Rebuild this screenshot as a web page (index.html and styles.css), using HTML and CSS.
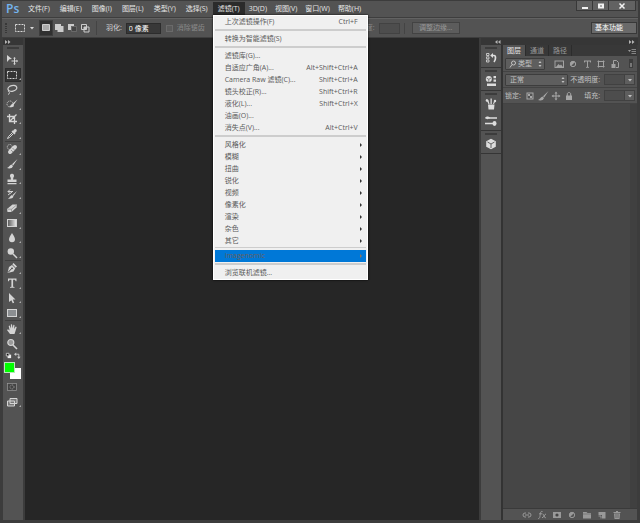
FILE: index.html
```html
<!DOCTYPE html>
<html lang="zh-CN">
<head>
<meta charset="utf-8">
<title>Ps</title>
<link rel="stylesheet" href="styles.css">
</head>
<body>
<svg class="defs" aria-hidden="true">
  <symbol id="marquee" viewBox="0 0 12 12"><rect x="1.5" y="2.5" width="9" height="7" fill="none" stroke="currentColor" stroke-dasharray="2 1"/></symbol>
  <symbol id="move" viewBox="0 0 12 12"><path d="M1 1l5 4-2.500.3L1 8z" fill="currentColor"/><path d="M8.500 4v6M5.500 7h6" stroke="currentColor"/><path d="M8.500 3l1.500 1.500h-3zM8.500 11l1.500-1.500h-3zM12 7l-1.500 1.500v-3z" fill="currentColor"/></symbol>
  <symbol id="lasso" viewBox="0 0 12 12"><ellipse cx="6.500" cy="4.500" rx="4.500" ry="2.800" fill="none" stroke="currentColor" stroke-width="1.200" transform="rotate(-12 6 5)"/><path d="M3 6.500c-1.500 1 .5 2 .5 2s0 1.500-1.500 2" fill="none" stroke="currentColor"/></symbol>
  <symbol id="quick" viewBox="0 0 12 12"><circle cx="4" cy="6" r="3" fill="none" stroke="currentColor" stroke-dasharray="1 1"/><path d="M11.500 1.500L6 6l1.200 1.500zM6.500 6C5 6 5 8 3 8.500c2 1.500 5 .5 5-1z" fill="currentColor"/></symbol>
  <symbol id="crop" viewBox="0 0 12 12"><path d="M3.500 1v7.500H11M1 3.500h7.500V11M4 8l6.500-6.500" fill="none" stroke="currentColor" stroke-width="1.300"/></symbol>
  <symbol id="dropper" viewBox="0 0 12 12"><path d="M8 1.500c1.500-1.500 3.500.5 2.500 2L9 5l.5.700-1 .8L5.500 3.500l1-1 .7.300z" fill="currentColor"/><path d="M6.500 4.500l-4 4-1 2 2-1 4-4" fill="none" stroke="currentColor"/></symbol>
  <symbol id="heal" viewBox="0 0 12 12"><circle cx="3.800" cy="4" r="2.500" fill="none" stroke="currentColor" stroke-dasharray="1 1"/><rect x="1" y="4.500" width="11" height="4" rx="2" fill="currentColor" transform="rotate(-45 6.500 6.500)"/><path d="M5 7l2 2M6.500 5l2 2" stroke="#777" stroke-width=".7"/></symbol>
  <symbol id="brush" viewBox="0 0 12 12"><path d="M11.500 1L6 6.300l1.200 1.200zM5.500 6.500l1.500 1.500c-.5 2.500-4 3-6 2 2-.5 2.500-3 4.500-3.500z" fill="currentColor"/></symbol>
  <symbol id="stamp" viewBox="0 0 12 12"><path d="M6 .8a2 2 0 0 1 1.500 3.400L7 6.500h3.500v2.500h-9V6.500H5l-.5-2.300A2 2 0 0 1 6 .8zM1.500 10h9v1.200h-9z" fill="currentColor"/></symbol>
  <symbol id="history" viewBox="0 0 12 12"><path d="M11 3L6.500 7l1 1zM6 7l1.500 1.500C7 10.500 4 11 2 10.500 4 10 4 7.500 6 7z" fill="currentColor"/><path d="M2 3.500h5M4 1.500l-2 2 2 2M2 7l4-3" stroke="currentColor" fill="none"/></symbol>
  <symbol id="eraser" viewBox="0 0 12 12"><path d="M1 7l5.500-4.500H11L10.500 5.500 5.500 10H1.500z" fill="currentColor"/><path d="M1.500 7.200h4L11 2.700M5.500 7.200V10" fill="none" stroke="#888" stroke-width=".7"/></symbol>
  <symbol id="gradient" viewBox="0 0 12 12"><linearGradient id="fade"><stop stop-color="#555"/><stop offset="1" stop-color="#eee"/></linearGradient><rect x="1.500" y="2.500" width="9" height="7" fill="url(#fade)" stroke="currentColor"/></symbol>
  <symbol id="drop" viewBox="0 0 12 12"><path d="M6 1c1 2 3 4 3 6.300a3 3 0 0 1-6 0C3 5 5 3 6 1z" fill="currentColor"/></symbol>
  <symbol id="dodge" viewBox="0 0 12 12"><circle cx="4.800" cy="4.500" r="3.200" fill="currentColor"/><path d="M7 7l4 4" stroke="currentColor" stroke-width="1.500"/></symbol>
  <symbol id="pen" viewBox="0 0 12 12"><path d="M7.500 1L11 4.500 9.700 5.700 6.300 2.300zM6 3l3.300 3.300L7.500 9.500 1.500 11 3 5z" fill="currentColor"/><path d="M2 10.500l3.500-3.800" stroke="#444"/><circle cx="6" cy="6.300" r=".9" fill="#444"/></symbol>
  <symbol id="type" viewBox="0 0 12 12"><path d="M2 1.500h8.500v2.800h-.8L9 2.700H7.100v7l1.400.3v.8H4V10l1.400-.3v-7H3.500l-.7 1.600H2z" fill="currentColor"/></symbol>
  <symbol id="arrow" viewBox="0 0 12 12"><path d="M3 1l6.500 6.500H6.800L8.200 10.700l-1.500.6L5.400 8.300 3 10z" fill="currentColor"/></symbol>
  <symbol id="shape" viewBox="0 0 12 12"><rect x="1.500" y="2.500" width="9" height="7" fill="#8b8e91" stroke="currentColor"/></symbol>
  <symbol id="hand" viewBox="0 0 12 12"><path d="M4 11L1 7l1-.7 1.600 1.200L2.700 3l1-.4L5 5.500 4.800 1.500 6 1.300l.6 4 .8-3.600 1.100.3-.3 4L9.700 3.500l1 .5L9.500 8 8.500 11z" fill="currentColor"/></symbol>
  <symbol id="zoom" viewBox="0 0 12 12"><circle cx="4.800" cy="4.500" r="3" fill="#9a9a9a" stroke="currentColor" stroke-width="1.200"/><path d="M7 7l4 4" stroke="currentColor" stroke-width="1.600"/></symbol>
  <symbol id="mask" viewBox="0 0 12 12"><rect x="1.500" y="2.500" width="9" height="7" fill="#444" stroke="currentColor" stroke-width=".7"/><circle cx="6" cy="6" r="2" fill="none" stroke="currentColor" stroke-dasharray="1 .7"/></symbol>
  <symbol id="screens" viewBox="0 0 12 12"><path d="M4 2.500h7v5H4zM1.500 5h7v5h-7z" fill="#777" stroke="currentColor"/></symbol>
  <symbol id="b-new" viewBox="0 0 12 12"><path d="M2.500 2.500h7v6h-7z" fill="#aaa" stroke="currentColor"/></symbol>
  <symbol id="b-add" viewBox="0 0 12 12"><path d="M2 2h6v2h2.500v6h-6V8H2z" fill="currentColor"/></symbol>
  <symbol id="b-sub" viewBox="0 0 12 12"><path d="M2 2h6v2H5v4H2z" fill="currentColor"/><path d="M5.500 4.500h5v5h-5z" fill="#444" stroke="#777" stroke-width=".7"/></symbol>
  <symbol id="b-cut" viewBox="0 0 12 12"><path d="M2.500 2.500h5v5h-5zM5 5h5v5H5z" fill="none" stroke="currentColor"/><path d="M5 5h2.500v2.500H5z" fill="currentColor"/></symbol>
  <symbol id="d-history" viewBox="0 0 12 12"><path d="M1.500 1.500h2.500v2H1.500zM1.500 4.800h2.500v2H1.500zM1.500 8h2.500v2H1.500z" fill="none" stroke="currentColor" stroke-width=".8"/><path d="M7 3.500h2c2 0 2 4 0 6.500" fill="none" stroke="currentColor" stroke-width="1.700"/><path d="M5.200 3.500L8 1v5z" fill="currentColor"/></symbol>
  <symbol id="d-props" viewBox="0 0 12 12"><circle cx="3.800" cy="4" r="3" fill="currentColor"/><path d="M1.500 3l2.300 1.300L6 3M3.800 4.300V7" stroke="#555" stroke-width=".7" fill="none"/><path d="M8.500 1h2.500v2.200H8.500zM8.500 4.500h2.500v2.200H8.500zM2 8.500h9v2.500H2z" fill="currentColor"/></symbol>
  <symbol id="d-brushes" viewBox="0 0 12 12"><path d="M3 6.500h6.500L9 11.500H3.500zM1 1l2.500 1.500 1 3.500h-1zM5.500.5h1.300V6H5.500zM11 2L9 3 8 6h1z" fill="currentColor"/><circle cx="2" cy="2.500" r="1.300" fill="currentColor"/><circle cx="10" cy="3" r="1.200" fill="currentColor"/></symbol>
  <symbol id="d-presets" viewBox="0 0 12 12"><path d="M4 3h8M0 8.500h8" stroke="currentColor" stroke-width="1.300"/><path d="M0 3c1-2 4-2 5 0-1 1.500-4 1.500-5 0z" fill="currentColor"/><ellipse cx="9.500" cy="8.500" rx="2" ry="2.400" fill="currentColor"/></symbol>
  <symbol id="d-cube" viewBox="0 0 12 12"><path d="M6 .8l4.800 2.500v5.400L6 11.300 1.200 8.700V3.300z" fill="currentColor"/><path d="M2.500 4L6 6l3.500-2M6 6v4" fill="none" stroke="#555" stroke-width=".9"/></symbol>
  <symbol id="image" viewBox="0 0 12 12"><rect x="2" y="3" width="8.500" height="6.500" fill="none" stroke="currentColor"/><path d="M3 9l2.500-3L7 7.500l1-1L10 9z" fill="currentColor"/></symbol>
  <symbol id="adjust" viewBox="0 0 12 12"><circle cx="6" cy="6" r="2.700" fill="#555" stroke="currentColor"/><path d="M4 8A2.800 2.800 0 0 1 8 4z" fill="currentColor"/></symbol>
  <symbol id="letter" viewBox="0 0 12 12"><path d="M3 2.500h7v2h-.7l-.5-1H7v5.300l1 .2v.7H5V9l1-.2V3.500H4.200l-.5 1H3z" fill="currentColor"/></symbol>
  <symbol id="vector" viewBox="0 0 12 12"><path d="M3.500 2.500v7M8.500 2.500v7M2.500 3.500h7M2.500 8.500h7" fill="none" stroke="currentColor"/></symbol>
  <symbol id="smart" viewBox="0 0 12 12"><path d="M4.500 6V2.500h3l2 2v5H7" fill="none" stroke="currentColor"/><path d="M2.500 6h4v4h-4z" fill="currentColor"/></symbol>
  <symbol id="pixels" viewBox="0 0 12 12"><rect x="3" y="3" width="6" height="6" fill="none" stroke="currentColor"/><path d="M4 4h2v2H4zM6 6h2v2H6z" fill="currentColor"/></symbol>
  <symbol id="cross" viewBox="0 0 12 12"><path d="M6 3v6M3 6h6" stroke="currentColor"/><path d="M6 1.500L7.500 3.500h-3zM6 10.500l1.500-2h-3zM1.500 6l2-1.500v3zM10.500 6l-2-1.500v3z" fill="currentColor"/></symbol>
  <symbol id="lock" viewBox="0 0 12 12"><path d="M3 5.500h6v4.500H3z" fill="currentColor"/><path d="M4.300 6V4c0-2 3.400-2 3.400 0v2" fill="none" stroke="currentColor"/></symbol>
  <symbol id="link" viewBox="0 0 12 12"><path d="M5 8H4a2 2 0 0 1 0-4h1M7 4h1a2 2 0 0 1 0 4H7M4 6h4" fill="none" stroke="currentColor"/></symbol>
  <symbol id="fx" viewBox="0 0 12 12"><path d="M2 9.500c2 .5 2-2.500 2.300-4.500S5.200 2 6.500 2.500M3 4.800h3M6.500 5c2 0 1 4 3.300 3.800M10 5C8.500 4.800 8 9 6 8.700" fill="none" stroke="currentColor"/></symbol>
  <symbol id="addmask" viewBox="0 0 12 12"><path d="M2 3h8v6H2z" fill="currentColor"/><circle cx="6" cy="6" r="1.600" fill="#444"/></symbol>
  <symbol id="folder" viewBox="0 0 12 12"><path d="M2 3h3.500l1 1h3.500v5.500H2z" fill="currentColor"/><path d="M2 5h8" stroke="#666" stroke-width=".6"/></symbol>
  <symbol id="new" viewBox="0 0 12 12"><path d="M2.500 3H9.500v6.500H6V6H2.500z" fill="currentColor"/><path d="M2.500 7h2.500v2.500" fill="none" stroke="currentColor"/></symbol>
  <symbol id="trash" viewBox="0 0 12 12"><path d="M3 4.500h6l-.5 5.500h-5zM2.500 3h7v1h-7zM5 2h2v1H5z" fill="currentColor"/><path d="M5 5v4M7 5v4" stroke="#555" stroke-width=".7"/></symbol>
  <symbol id="updown" viewBox="0 0 6 8"><path d="M3 1l1.500 2h-3zM3 7l1.500-2h-3z" fill="currentColor"/></symbol>
  <symbol id="down" viewBox="0 0 6 6"><path d="M1 2h4L3 4.500z" fill="currentColor"/></symbol>
  <symbol id="expand" viewBox="0 0 6 6"><path d="M0 1l2.500 2L0 5zM3 1l2.500 2L3 5z" fill="currentColor"/></symbol>
  <symbol id="collapse" viewBox="0 0 6 6"><path d="M2.500 1L0 3l2.500 2zM5.500 1L3 3l2.500 2z" fill="currentColor"/></symbol>
</svg>

<div class="app">
  <header class="menubar">
    <div class="logo">Ps</div>
    <nav class="menus">
      <button>文件(F)</button><button>编辑(E)</button><button>图像(I)</button><button>图层(L)</button><button>类型(Y)</button><button>选择(S)</button>
      <div class="menu-host">
        <button class="open" aria-expanded="true">滤镜(T)</button>
        <div class="dropdown" role="menu">
          <button role="menuitem">上次滤镜操作(F)<kbd>Ctrl+F</kbd></button>
          <hr>
          <button role="menuitem">转换为智能滤镜(S)</button>
          <hr>
          <button role="menuitem">滤镜库(G)...</button>
          <button role="menuitem">自适应广角(A)...<kbd>Alt+Shift+Ctrl+A</kbd></button>
          <button role="menuitem">Camera Raw 滤镜(C)...<kbd>Shift+Ctrl+A</kbd></button>
          <button role="menuitem">镜头校正(R)...<kbd>Shift+Ctrl+R</kbd></button>
          <button role="menuitem">液化(L)...<kbd>Shift+Ctrl+X</kbd></button>
          <button role="menuitem">油画(O)...</button>
          <button role="menuitem">消失点(V)...<kbd>Alt+Ctrl+V</kbd></button>
          <hr>
          <button role="menuitem" class="sub">风格化</button>
          <button role="menuitem" class="sub">模糊</button>
          <button role="menuitem" class="sub">扭曲</button>
          <button role="menuitem" class="sub">锐化</button>
          <button role="menuitem" class="sub">视频</button>
          <button role="menuitem" class="sub">像素化</button>
          <button role="menuitem" class="sub">渲染</button>
          <button role="menuitem" class="sub">杂色</button>
          <button role="menuitem" class="sub">其它</button>
          <hr class="tight">
          <button role="menuitem" class="sub current">Imagenomic</button>
          <hr>
          <button role="menuitem">浏览联机滤镜...</button>
        </div>
      </div>
      <button>3D(D)</button><button>视图(V)</button><button>窗口(W)</button><button>帮助(H)</button>
    </nav>
    <div class="window-buttons">
      <button aria-label="最小化"><svg viewBox="0 0 8 8"><path d="M1 6h6" stroke="currentColor" stroke-width="2"/></svg></button>
      <button aria-label="最大化"><svg viewBox="0 0 8 8"><path d="M2 2.500h4v3H2z" fill="none" stroke="currentColor" stroke-width="2"/></svg></button>
      <button class="close" aria-label="关闭"><svg viewBox="0 0 8 8"><path d="M1.500 1.500l5 5M6.500 1.500l-5 5" stroke="currentColor" stroke-width="1.500"/></svg></button>
    </div>
  </header>

  <div class="options">
    <span class="handle"></span>
    <button class="preset" aria-label="选框工具"><svg class="icon"><use href="#marquee"/></svg><svg class="tiny"><use href="#down"/></svg></button>
    <div class="modes">
      <button class="on" aria-label="新选区"><svg class="icon"><use href="#b-new"/></svg></button>
      <button aria-label="添加到选区"><svg class="icon"><use href="#b-add"/></svg></button>
      <button aria-label="从选区减去"><svg class="icon"><use href="#b-sub"/></svg></button>
      <button aria-label="与选区交叉"><svg class="icon"><use href="#b-cut"/></svg></button>
    </div>
    <label class="field feather">羽化: <input type="text" value="0 像素"></label>
    <label class="field dim"><input type="checkbox" disabled>消除锯齿</label>
    <label class="field dim height">高度: <input type="text" disabled></label>
    <button class="refine" disabled>调整边缘...</button>
    <button class="workspace-name">基本功能</button>
  </div>

  <main class="workspace">
    <aside class="tools">
      <div class="strip"><svg class="tiny"><use href="#expand"/></svg></div>
      <span class="grip"></span>
      <div class="group six">
        <button class="plain" aria-label="移动"><svg class="icon"><use href="#move"/></svg></button>
        <button class="on" aria-label="矩形选框"><svg class="icon"><use href="#marquee"/></svg></button>
        <button aria-label="套索"><svg class="icon"><use href="#lasso"/></svg></button>
        <button aria-label="快速选择"><svg class="icon"><use href="#quick"/></svg></button>
        <button aria-label="裁剪"><svg class="icon"><use href="#crop"/></svg></button>
        <button aria-label="吸管"><svg class="icon"><use href="#dropper"/></svg></button>
      </div>
      <div class="group eight">
        <button aria-label="修复画笔"><svg class="icon"><use href="#heal"/></svg></button>
        <button aria-label="画笔"><svg class="icon"><use href="#brush"/></svg></button>
        <button aria-label="仿制图章"><svg class="icon"><use href="#stamp"/></svg></button>
        <button aria-label="历史记录画笔"><svg class="icon"><use href="#history"/></svg></button>
        <button aria-label="橡皮擦"><svg class="icon"><use href="#eraser"/></svg></button>
        <button aria-label="渐变"><svg class="icon"><use href="#gradient"/></svg></button>
        <button aria-label="模糊"><svg class="icon"><use href="#drop"/></svg></button>
        <button aria-label="减淡"><svg class="icon"><use href="#dodge"/></svg></button>
      </div>
      <div class="group four">
        <button aria-label="钢笔"><svg class="icon"><use href="#pen"/></svg></button>
        <button aria-label="文字"><svg class="icon"><use href="#type"/></svg></button>
        <button aria-label="路径选择"><svg class="icon"><use href="#arrow"/></svg></button>
        <button aria-label="矩形"><svg class="icon"><use href="#shape"/></svg></button>
      </div>
      <div class="group two">
        <button aria-label="抓手"><svg class="icon"><use href="#hand"/></svg></button>
        <button class="plain" aria-label="缩放"><svg class="icon"><use href="#zoom"/></svg></button>
      </div>
      <div class="swap">
        <button aria-label="默认颜色"><svg viewBox="0 0 8 8"><path d="M3 3h4v4H3z" fill="#eee"/><path d="M1.500 1.500h3v3h-3z" fill="#111" stroke="#ccc"/></svg></button>
        <button aria-label="切换颜色"><svg viewBox="0 0 8 8"><path d="M2 2.500h3.500V6" fill="none" stroke="#ccc"/><path d="M0 2.500L2.500.5v4zM5.500 8l2-2.500h-4z" fill="#ccc"/></svg></button>
      </div>
      <div class="swatches"><button class="back" aria-label="背景色"></button><button class="front" aria-label="前景色"></button></div>
      <div class="group two">
        <button class="plain dark" aria-label="快速蒙版"><svg class="icon"><use href="#mask"/></svg></button>
        <button aria-label="屏幕模式"><svg class="icon"><use href="#screens"/></svg></button>
      </div>
    </aside>

    <div class="canvas"></div>

    <aside class="right">
      <div class="strip heads"><svg class="tiny"><use href="#collapse"/></svg><svg class="tiny"><use href="#expand"/></svg></div>
      <div class="columns">
        <div class="dock">
          <div><span class="grip"></span><button aria-label="历史记录"><svg class="icon"><use href="#d-history"/></svg></button></div>
          <div><span class="grip"></span><button aria-label="属性"><svg class="icon"><use href="#d-props"/></svg></button></div>
          <div><span class="grip"></span><button aria-label="画笔"><svg class="icon"><use href="#d-brushes"/></svg></button><button aria-label="画笔预设"><svg class="icon"><use href="#d-presets"/></svg></button></div>
          <div><span class="grip"></span><button aria-label="3D"><svg class="icon"><use href="#d-cube"/></svg></button></div>
        </div>
        <section class="panel">
          <div class="tabs">
            <button class="active">图层</button><button>通道</button><button>路径</button>
            <button class="panel-menu" aria-label="面板菜单"><svg viewBox="0 0 8 6"><path d="M0 2h3L1.500 4z" fill="currentColor"/><path d="M3.500 1.500H8M3.500 3.500H8M3.500 5.500H8" stroke="currentColor" stroke-width=".8"/></svg></button>
          </div>
          <div class="row">
            <div class="select kind"><svg class="lens" viewBox="0 0 8 8"><circle cx="4.500" cy="3" r="2" fill="none" stroke="currentColor"/><path d="M3 4.500L1 7.500" stroke="currentColor"/></svg><select aria-label="滤镜类型"><option>类型</option></select><svg class="ud"><use href="#updown"/></svg></div>
            <div class="filters">
              <button aria-label="像素"><svg class="icon"><use href="#image"/></svg></button>
              <button aria-label="调整"><svg class="icon"><use href="#adjust"/></svg></button>
              <button aria-label="文字"><svg class="icon"><use href="#letter"/></svg></button>
              <button aria-label="形状"><svg class="icon"><use href="#vector"/></svg></button>
              <button aria-label="智能对象"><svg class="icon"><use href="#smart"/></svg></button>
            </div>
            <button class="toggle" aria-label="打开或关闭滤镜"></button>
          </div>
          <div class="row">
            <div class="select blend"><select aria-label="混合模式"><option>正常</option></select><svg class="ud"><use href="#updown"/></svg></div>
            <label class="amount" for="opacity">不透明度:</label>
            <div class="combo"><input id="opacity" type="text" disabled><button aria-label="不透明度选项"><svg class="tiny"><use href="#down"/></svg></button></div>
          </div>
          <div class="row">
            <span class="lock-label">锁定:</span>
            <div class="locks">
              <button aria-label="锁定透明像素"><svg class="icon"><use href="#pixels"/></svg></button>
              <button aria-label="锁定图像像素"><svg class="icon"><use href="#brush"/></svg></button>
              <button aria-label="锁定位置"><svg class="icon"><use href="#cross"/></svg></button>
              <button aria-label="锁定全部"><svg class="icon"><use href="#lock"/></svg></button>
            </div>
            <label class="amount" for="fill">填充:</label>
            <div class="combo"><input id="fill" type="text" disabled><button aria-label="填充选项"><svg class="tiny"><use href="#down"/></svg></button></div>
          </div>
          <div class="layers"></div>
          <footer>
            <button aria-label="链接图层"><svg class="icon"><use href="#link"/></svg></button>
            <button aria-label="图层样式"><svg class="icon"><use href="#fx"/></svg></button>
            <button aria-label="添加蒙版"><svg class="icon"><use href="#addmask"/></svg></button>
            <button aria-label="调整图层"><svg class="icon"><use href="#adjust"/></svg></button>
            <button aria-label="新建组"><svg class="icon"><use href="#folder"/></svg></button>
            <button aria-label="新建图层"><svg class="icon"><use href="#new"/></svg></button>
            <button aria-label="删除图层"><svg class="icon"><use href="#trash"/></svg></button>
          </footer>
        </section>
      </div>
    </aside>
  </main>
</div>
</body>
</html>
```

FILE: styles.css
```css
* { box-sizing: border-box; }

body {
  margin: 0;
  background: #535353;
  color: #d8d8d8;
  font: 7px/10px "Open Sans", "Noto Sans CJK SC", sans-serif;
}

button, input, select {
  margin: 0;
  padding: 0;
  border: 0;
  border-radius: 0;
  background: none;
  color: inherit;
  font: inherit;
  appearance: none;
}

svg { display: block; }
.defs { position: absolute; width: 0; height: 0; }
.icon { width: 12px; height: 12px; }
.tiny { width: 6px; height: 6px; }

.app {
  display: flex;
  flex-direction: column;
  min-height: 100vh;
  border: solid #3c3c3c;
  border-width: 1px 2px 3px;
}

/* Menu bar */
.menubar {
  display: flex;
  align-items: stretch;
  height: 17px;
  border-bottom: 1px solid #3e3e3e;
}
.logo {
  width: 21px;
  padding-left: 4px;
  color: #75b5ee;
  font-size: 12px;
  font-weight: 600;
  line-height: 15px;
}
.menus { display: flex; flex: 1; white-space: nowrap; }
.menus > button, .menu-host > button {
  height: 13px;
  margin-top: 1px;
  padding: 0 5px;
  color: #e6e6e6;
}
.menus > .menu-host ~ button { padding: 0 4px; }
.menu-host { position: relative; }
.menu-host > .open { background: #2b2b2b; }

.dropdown {
  position: absolute;
  z-index: 5;
  top: 14px;
  left: 0;
  width: 155px;
  border: 1px solid #fff;
  background: #f0f0f0;
  box-shadow: 0 0 2px #000;
  color: #5a5a5a;
}
.dropdown button {
  display: flex;
  align-items: center;
  justify-content: space-between;
  width: 100%;
  height: 12px;
  padding: 0 9px 0 11px;
}
.dropdown kbd { font: inherit; }
.dropdown hr {
  height: 5px;
  margin: 0 1px;
  border: solid #f0f0f0;
  border-width: 1px 0 2px;
  background: #cdcdcd;
}
.dropdown hr.tight { height: 3px; border-width: 0 0 2px; }
.dropdown .sub { padding-right: 5px; }
.dropdown .sub::after {
  border: 2px solid transparent;
  border-left-color: #333;
  border-right: 0;
  content: "";
}
.dropdown .current {
  width: calc(100% - 2px);
  margin: 0 1px;
  padding: 0 4px 0 10px;
  background: #0078d7;
  color: #6b5f5a;
}
.dropdown .current::after { border-left-color: #8a7360; }

.window-buttons {
  display: flex;
  height: 10px;
  margin-right: 2px;
  border: 1px solid #383838;
  border-top: 0;
}
.window-buttons button {
  display: grid;
  place-items: center;
  width: 16px;
  border-right: 1px solid #383838;
  background: #626262;
  color: #f2f2f2;
}
.window-buttons .close { width: 26px; border-right: 0; }
.window-buttons svg { width: 8px; height: 8px; }

/* Options bar */
.options {
  display: flex;
  align-items: center;
  height: 20px;
  padding: 0 1px 0 3px;
  border-top: 1px solid #626262;
  border-bottom: 1px solid #3e3e3e;
  white-space: nowrap;
}
.handle { width: 2px; height: 10px; border: dotted #383838; border-width: 0 1px; }
.preset { display: flex; align-items: center; gap: 3px; margin-left: 7px; }
.modes {
  display: flex;
  gap: 1px;
  margin-left: 5px;
  padding-right: 5px;
  border-right: 1px solid #444;
  color: #ccc;
}
.modes button { padding: 1px 0; }
.modes .on { background: #303030; outline: 1px solid #3d3d3d; }
.field { display: flex; align-items: center; gap: 4px; }
.feather { margin-left: 9px; }
.feather input { width: 35px; height: 11px; padding: 0 2px; border: 1px solid #2c2c2c; background: #383838; color: #fff; }
.dim { margin-left: 5px; color: #8a8a8a; }
.dim input { width: 7px; height: 7px; border: 1px solid #6a6a6a; background: #5a5a5a; }
.height { margin-left: 154px; padding-right: 4px; border-right: 1px solid #444; }
.height input { width: 21px; height: 11px; border: 1px solid #424242; background: #4d4d4d; }
.refine { width: 48px; height: 12px; margin-left: 7px; border: 1px solid #434343; background: #5c5c5c; color: #999; }
.workspace-name { width: 46px; height: 12px; margin-left: auto; padding-right: 10px; border: 1px solid #383838; background: #6a6a6a; color: #fff; }

/* Workspace */
.workspace { display: flex; flex: 1; }
.canvas { flex: 1; background: #262626; }
.strip {
  display: flex;
  align-items: center;
  height: 7px;
  padding: 0 2px;
  background: #363636;
  color: #b5b5b5;
}
.grip { display: block; width: 12px; height: 2px; margin: 2px auto; background: #3c3c3c; }

.tools { width: 23px; border: solid #3c3c3c; border-width: 0 2px 0 1px; color: #d4d4d4; }
.group {
  display: grid;
  grid-auto-rows: 1fr;
  margin: 0 2px;
  border-bottom: 1px solid #404040;
}
.tools .grip { margin-bottom: 4px; }
.six { height: 89px; }
.eight { height: 119px; }
.four { height: 60px; }
.two { height: 30px; border: 0; }
.group button { position: relative; display: grid; align-items: center; padding-left: 1px; }
.group button::after {
  position: absolute;
  right: 0;
  bottom: 2px;
  border: 1px solid #aaa;
  border-top-color: transparent;
  border-left-color: transparent;
  content: "";
}
.group .plain::after { display: none; }
.group .on { background: #353535; outline: 1px solid #2d2d2d; outline-offset: -1px; }
.group .dark { color: #999; }
.swap { display: flex; justify-content: space-between; margin: 1px 2px 0; }
.swap svg { width: 7px; height: 7px; }
.swatches { display: grid; grid-template: 6px 5px 6px / 6px 5px 6px; margin: 3px 1px 0; }
.front { grid-area: 1 / 1 / 3 / 3; border: 1px solid #b8e8b8; background: #0f0; }
.back { grid-area: 2 / 2 / 4 / 4; background: #fff; }

.right { display: flex; flex-direction: column; width: 159px; border-left: 2px solid #3c3c3c; }
.heads { justify-content: space-between; padding: 0 3px 0 14px; }
.columns { display: flex; flex: 1; }
.dock { width: 22px; border-right: 2px solid #333; color: #ddd; }
.dock > div { display: flow-root; padding-bottom: 3px; border-bottom: 1px solid #353535; }
.dock .grip { margin: 2px auto 3px; }
.dock button { display: block; margin: 0 auto; }
.dock button + button { margin-top: 5px; }

.panel { display: flex; flex: 1; flex-direction: column; border-right: 1px solid #3c3c3c; }
.tabs { display: flex; height: 11px; background: #383838; color: #999; }
.tabs button { padding: 0 4px; border-right: 1px solid #2c2c2c; }
.tabs .active { background: #535353; color: #e8e8e8; }
.tabs .panel-menu { margin-left: auto; padding: 0 1px; border: 0; }
.panel-menu svg { width: 8px; height: 6px; }

.row {
  display: flex;
  align-items: center;
  height: 16px;
  padding: 0 2px;
  border-bottom: 1px solid #434343;
  color: #c2c2c2;
  white-space: nowrap;
}
.select { position: relative; display: flex; align-items: center; height: 12px; border: 1px solid #3d3d3d; border-radius: 1px; background: #5e5e5e; }
.select select { flex: 1; min-width: 0; height: 10px; padding-left: 4px; }
.kind { width: 40px; }
.kind select { padding-left: 12px; }
.blend { width: 63px; }
.lens { position: absolute; left: 3px; width: 8px; height: 8px; }
.ud { position: absolute; right: 1px; width: 6px; height: 8px; pointer-events: none; }
.filters { display: flex; gap: 2px; margin-left: 8px; color: #a2a2a2; }
.toggle { width: 4px; height: 9px; margin: 0 2px 0 auto; border: 1px solid #3d3d3d; border-top-width: 4px; background: #777; }
.amount { margin-left: auto; }
.combo { display: flex; width: 31px; height: 11px; margin-left: 4px; border: 1px solid #414141; }
.combo input { flex: 1; min-width: 0; background: #4d4d4d; }
.combo button { display: grid; place-items: center; width: 10px; border-left: 1px solid #414141; background: #5e5e5e; }
.lock-label { width: 19px; }
.locks { display: flex; gap: 1px; color: #a8a8a8; }
.layers { flex: 1; border-right: 7px solid #404040; background: #464646; }
.panel footer { display: flex; justify-content: center; gap: 3px; height: 12px; padding-left: 4px; border-top: 1px solid #3a3a3a; color: #999; }
.panel footer button { height: 11px; }
```
